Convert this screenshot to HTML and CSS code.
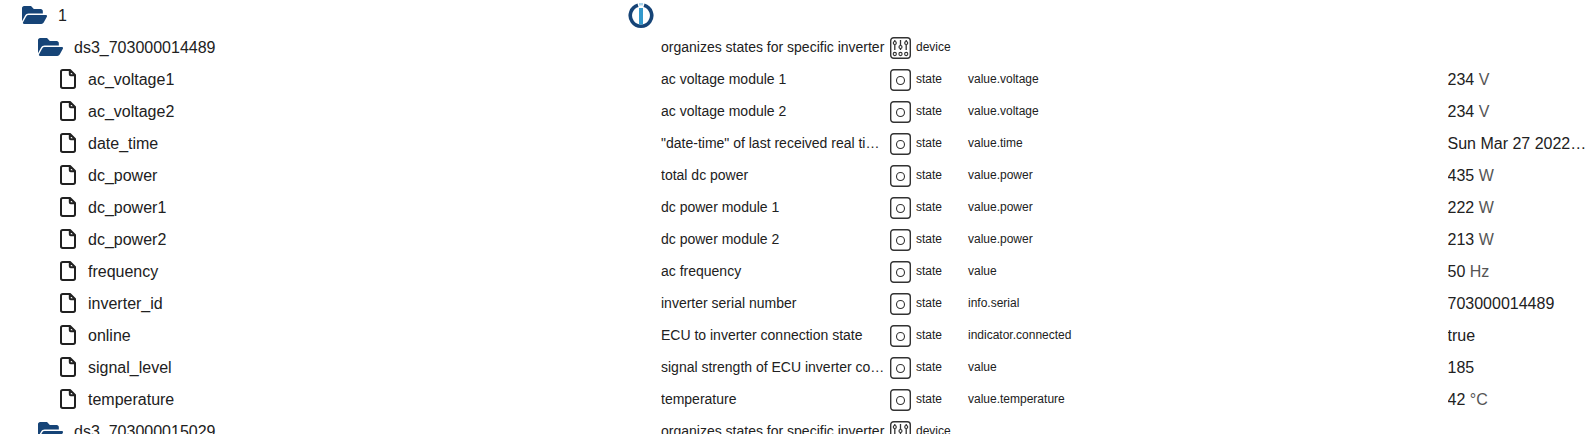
FILE: index.html
```html
<!DOCTYPE html>
<html lang="en">
<head>
<meta charset="utf-8">
<title>Objects</title>
<link rel="stylesheet" href="styles.css">
</head>
<body>
<svg class="defs" aria-hidden="true">
  <symbol id="folder" viewBox="0 64 576 384" preserveAspectRatio="none"><path d="M572.7 292.1 500.3 416.2A64 64 0 0 1 445 448H45c-18.500 0-30.100-20.100-20.700-36.100l72.400-124.200A64 64 0 0 1 152 256h400c18.500 0 30.100 20.100 20.700 36.100zM152 224h328v-48c0-26.500-21.500-48-48-48H272l-64-64H48C21.500 64 0 85.500 0 112v278l69.100-118.400C86.200 242.300 118 224 152 224z"/></symbol>
  <symbol id="file" viewBox="0 0 16 20"><path d="M2.600 1h7.400L15 6v11.300q0 1.700-1.700 1.700H2.700Q1 19 1 17.300V2.700Q1 1 2.700 1zM9.800 1.200v4.100q0 .9.900.9h4.100" fill="none" stroke="currentColor" stroke-width="2" stroke-linejoin="round"/></symbol>
  <symbol id="state" viewBox="0 0 21 22"><rect x=".7" y=".7" width="19.600" height="20.600" rx="3" fill="none" stroke="currentColor" stroke-width="1.400"/><circle cx="10.500" cy="11.500" r="4" fill="none" stroke="currentColor" stroke-width="1.100"/></symbol>
  <symbol id="device" viewBox="0 0 21 22"><rect x=".7" y=".7" width="19.600" height="20.600" rx="3" fill="none" stroke="currentColor" stroke-width="1.400"/><path d="M4.800 3v10M10.500 3v10M16.200 3v10" fill="none" stroke="currentColor" stroke-width="1.300"/><circle cx="4.800" cy="6" r="1.500" fill="#fff" stroke="currentColor" stroke-width="1.200"/><circle cx="10.500" cy="10" r="1.500" fill="#fff" stroke="currentColor" stroke-width="1.200"/><circle cx="16.200" cy="6" r="1.500" fill="#fff" stroke="currentColor" stroke-width="1.200"/><circle cx="4.800" cy="17" r="1.600" fill="none" stroke="currentColor" stroke-width="1.100"/><circle cx="10.500" cy="17" r="1.600" fill="none" stroke="currentColor" stroke-width="1.100"/><circle cx="16.200" cy="17" r="1.600" fill="none" stroke="currentColor" stroke-width="1.100"/></symbol>
</svg>
<main class="table">
  <div class="row">
    <div class="name lvl0"><svg class="folder"><use href="#folder"/></svg><span>1</span></div>
    <div class="logo-cell">
      <svg class="logo" viewBox="0 0 28 28"><path d="M16 3.230A10.700 10.700 0 1 1 10 3.230" fill="none" stroke="#164477" stroke-width="3.600"/><rect x="11" y="1" width="4" height="2.500" fill="#a9d3ea"/><rect x="11" y="6" width="4" height="16.500" fill="#3399cc"/></svg>
    </div>
    <div></div><div></div><div></div><div></div>
  </div>
  <div class="row">
    <div class="name lvl1"><svg class="folder"><use href="#folder"/></svg><span>ds3_703000014489</span></div>
    <div></div>
    <div class="desc">organizes states for specific inverter</div>
    <div class="type"><svg class="ticon"><use href="#device"/></svg><span>device</span></div>
    <div class="role"></div><div class="value"></div>
  </div>
  <div class="row">
    <div class="name lvl2"><svg class="file"><use href="#file"/></svg><span>ac_voltage1</span></div>
    <div></div>
    <div class="desc">ac voltage module 1</div>
    <div class="type"><svg class="ticon"><use href="#state"/></svg><span>state</span></div>
    <div class="role">value.voltage</div><div class="value">234 <span class="unit">V</span></div>
  </div>
  <div class="row">
    <div class="name lvl2"><svg class="file"><use href="#file"/></svg><span>ac_voltage2</span></div>
    <div></div>
    <div class="desc">ac voltage module 2</div>
    <div class="type"><svg class="ticon"><use href="#state"/></svg><span>state</span></div>
    <div class="role">value.voltage</div><div class="value">234 <span class="unit">V</span></div>
  </div>
  <div class="row">
    <div class="name lvl2"><svg class="file"><use href="#file"/></svg><span>date_time</span></div>
    <div></div>
    <div class="desc">"date-time" of last received real time data</div>
    <div class="type"><svg class="ticon"><use href="#state"/></svg><span>state</span></div>
    <div class="role">value.time</div><div class="value">Sun Mar 27 2022 14:05:12</div>
  </div>
  <div class="row">
    <div class="name lvl2"><svg class="file"><use href="#file"/></svg><span>dc_power</span></div>
    <div></div>
    <div class="desc">total dc power</div>
    <div class="type"><svg class="ticon"><use href="#state"/></svg><span>state</span></div>
    <div class="role">value.power</div><div class="value">435 <span class="unit">W</span></div>
  </div>
  <div class="row">
    <div class="name lvl2"><svg class="file"><use href="#file"/></svg><span>dc_power1</span></div>
    <div></div>
    <div class="desc">dc power module 1</div>
    <div class="type"><svg class="ticon"><use href="#state"/></svg><span>state</span></div>
    <div class="role">value.power</div><div class="value">222 <span class="unit">W</span></div>
  </div>
  <div class="row">
    <div class="name lvl2"><svg class="file"><use href="#file"/></svg><span>dc_power2</span></div>
    <div></div>
    <div class="desc">dc power module 2</div>
    <div class="type"><svg class="ticon"><use href="#state"/></svg><span>state</span></div>
    <div class="role">value.power</div><div class="value">213 <span class="unit">W</span></div>
  </div>
  <div class="row">
    <div class="name lvl2"><svg class="file"><use href="#file"/></svg><span>frequency</span></div>
    <div></div>
    <div class="desc">ac frequency</div>
    <div class="type"><svg class="ticon"><use href="#state"/></svg><span>state</span></div>
    <div class="role">value</div><div class="value">50 <span class="unit">Hz</span></div>
  </div>
  <div class="row">
    <div class="name lvl2"><svg class="file"><use href="#file"/></svg><span>inverter_id</span></div>
    <div></div>
    <div class="desc">inverter serial number</div>
    <div class="type"><svg class="ticon"><use href="#state"/></svg><span>state</span></div>
    <div class="role">info.serial</div><div class="value">703000014489</div>
  </div>
  <div class="row">
    <div class="name lvl2"><svg class="file"><use href="#file"/></svg><span>online</span></div>
    <div></div>
    <div class="desc">ECU to inverter connection state</div>
    <div class="type"><svg class="ticon"><use href="#state"/></svg><span>state</span></div>
    <div class="role">indicator.connected</div><div class="value">true</div>
  </div>
  <div class="row">
    <div class="name lvl2"><svg class="file"><use href="#file"/></svg><span>signal_level</span></div>
    <div></div>
    <div class="desc">signal strength of ECU inverter connection</div>
    <div class="type"><svg class="ticon"><use href="#state"/></svg><span>state</span></div>
    <div class="role">value</div><div class="value">185</div>
  </div>
  <div class="row">
    <div class="name lvl2"><svg class="file"><use href="#file"/></svg><span>temperature</span></div>
    <div></div>
    <div class="desc">temperature</div>
    <div class="type"><svg class="ticon"><use href="#state"/></svg><span>state</span></div>
    <div class="role">value.temperature</div><div class="value">42 <span class="unit">°C</span></div>
  </div>
  <div class="row">
    <div class="name lvl1"><svg class="folder"><use href="#folder"/></svg><span>ds3_703000015029</span></div>
    <div></div>
    <div class="desc">organizes states for specific inverter</div>
    <div class="type"><svg class="ticon"><use href="#device"/></svg><span>device</span></div>
    <div class="role"></div><div class="value"></div>
  </div>
</main>
</body>
</html>
```
FILE: styles.css
```css
html, body {
  margin: 0;
  padding: 0;
  height: 434px;
  overflow: hidden;
  background: #fff;
}
body {
  font-family: "Liberation Sans", Arial, sans-serif;
  color: #212121;
}
.defs {
  display: none;
}
.table {
  display: flex;
  flex-direction: column;
}
.row {
  display: grid;
  grid-template-columns: 628px 33px 228px 79px 479.5px 142.5px;
  height: 32px;
  align-items: center;
  flex: none;
}
.name {
  display: flex;
  align-items: center;
  font-size: 16px;
  white-space: nowrap;
}
.lvl0 { padding-left: 22px; }
.lvl1 { padding-left: 38px; }
.lvl2 { padding-left: 60px; }
.folder {
  width: 25px;
  height: 18px;
  fill: #164477;
  margin-right: 11px;
  margin-bottom: 2px;
  flex: none;
}
.file {
  width: 16px;
  height: 20px;
  color: #212121;
  margin-right: 12px;
  margin-bottom: 2px;
  flex: none;
}
.logo-cell {
  display: flex;
  align-items: center;
}
.logo {
  width: 28px;
  height: 28px;
}
.desc {
  font-size: 14px;
  white-space: nowrap;
  overflow: hidden;
  text-overflow: ellipsis;
  padding-bottom: 2px;
}
.type {
  display: flex;
  align-items: center;
  font-size: 12px;
}
.type span {
  padding-bottom: 2px;
}
.ticon {
  width: 21px;
  height: 22px;
  color: #333;
  margin-left: 1px;
  margin-right: 5px;
  flex: none;
}
.role {
  font-size: 12px;
  white-space: nowrap;
  padding-bottom: 2px;
}
.value {
  font-size: 16px;
  white-space: nowrap;
  overflow: hidden;
  text-overflow: ellipsis;
}
.unit {
  color: #555;
}
```
